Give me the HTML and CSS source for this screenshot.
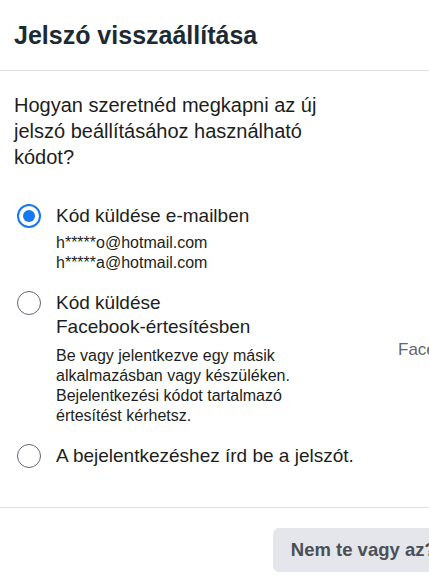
FILE: index.html
```html
<!DOCTYPE html>
<html lang="hu">
<head>
<meta charset="utf-8">
<title>Jelszó visszaállítása</title>
<link rel="stylesheet" href="styles.css">
</head>
<body>
<div class="dialog">
  <div class="header">
    <h2 class="title">Jelszó visszaállítása</h2>
  </div>
  <div class="content">
    <div class="left">
      <div class="question">Hogyan szeretnéd megkapni az új jelszó beállításához használható kódot?</div>
      <div class="options">
        <label class="option">
          <span class="radio checked"></span>
          <span class="opt-text">
            <span class="opt-label">Kód küldése e-mailben</span>
            <span class="opt-sub">h*****o@hotmail.com<br>h*****a@hotmail.com</span>
          </span>
        </label>
        <label class="option">
          <span class="radio"></span>
          <span class="opt-text">
            <span class="opt-label">Kód küldése <span class="nowrap">Facebook-értesítésben</span></span>
            <span class="opt-sub desc">Be vagy jelentkezve egy másik alkalmazásban vagy készüléken. Bejelentkezési kódot tartalmazó értesítést kérhetsz.</span>
          </span>
        </label>
        <label class="option">
          <span class="radio"></span>
          <span class="opt-text">
            <span class="opt-label nowrap">A bejelentkezéshez írd be a jelszót.</span>
          </span>
        </label>
      </div>
    </div>
    <div class="right">
      <div class="user-name">Facebook-felhasználó</div>
    </div>
  </div>
  <div class="footer">
    <button class="btn btn-gray">Nem te vagy az?</button>
    <button class="btn btn-blue">Folytatás</button>
  </div>
</div>
</body>
</html>
```
FILE: styles.css
```css
html, body {
  margin: 0;
  padding: 0;
  overflow: hidden;
  background: #ffffff;
}
body {
  font-family: "Liberation Sans", Arial, Helvetica, sans-serif;
  color: #1c1e21;
}
.dialog {
  width: 595px;
}
.nowrap {
  white-space: nowrap;
}
.header {
  height: 70px;
  display: flex;
  align-items: center;
  padding: 0 14px;
  border-bottom: 1px solid #dddfe2;
}
.title {
  margin: 0;
  font-size: 25px;
  line-height: 28px;
  font-weight: 700;
  color: #1c2b33;
}
.content {
  display: flex;
  padding: 21px 14px 39px;
  border-bottom: 1px solid #dddfe2;
}
.left {
  width: 340px;
  flex: none;
}
.question {
  font-size: 20px;
  line-height: 26px;
  color: #1c1e21;
  margin-bottom: 34px;
}
.options {
  display: flex;
  flex-direction: column;
  gap: 18px;
}
.option {
  display: flex;
  align-items: flex-start;
  gap: 15px;
  padding-left: 3px;
}
.radio {
  flex: none;
  box-sizing: border-box;
  width: 24px;
  height: 24px;
  border-radius: 50%;
  border: 1.5px solid #606770;
  display: flex;
  align-items: center;
  justify-content: center;
}
.radio.checked {
  border: 2px solid #1877f2;
}
.radio.checked::after {
  content: "";
  width: 12px;
  height: 12px;
  border-radius: 50%;
  background: #1877f2;
}
.opt-text {
  display: flex;
  flex-direction: column;
  gap: 5px;
  width: 296px;
}
.opt-label {
  font-size: 19px;
  line-height: 24px;
  color: #1c1e21;
}
.opt-sub {
  font-size: 16px;
  line-height: 20px;
  color: #1c1e21;
}
.opt-sub.desc {
  margin-top: 2px;
}
.right {
  padding-left: 44px;
  padding-top: 246px;
}
.user-name {
  font-size: 17px;
  line-height: 24px;
  color: #606770;
  white-space: nowrap;
}
.footer {
  display: flex;
  justify-content: flex-end;
  gap: 8px;
  padding: 20px 16px;
}
.btn {
  height: 44px;
  padding: 0 18px;
  border: none;
  border-radius: 6px;
  font-family: "Liberation Sans", Arial, Helvetica, sans-serif;
  font-size: 18.5px;
  font-weight: 700;
}
.btn-gray {
  background: #e4e6eb;
  color: #4b4f56;
}
.btn-blue {
  background: #1877f2;
  color: #ffffff;
}
```
